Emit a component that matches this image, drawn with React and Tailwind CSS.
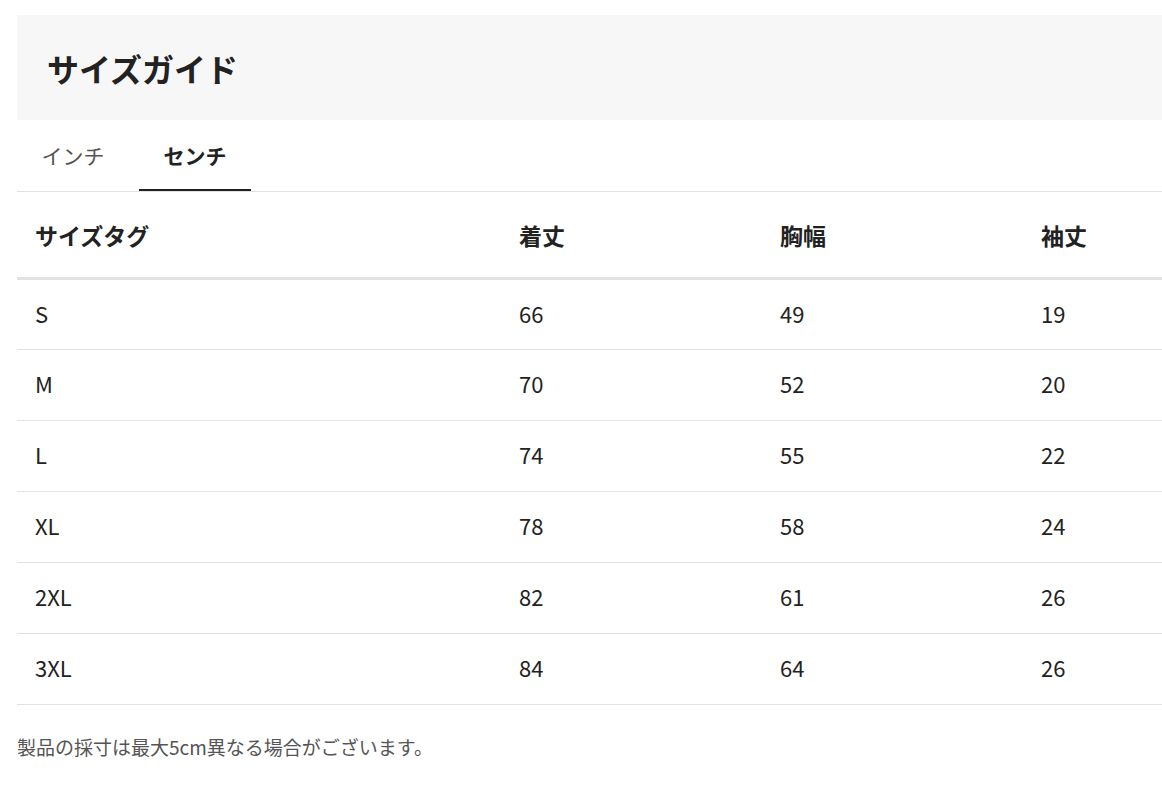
import React from "react";

const rows = [
  ["S", "66", "49", "19"],
  ["M", "70", "52", "20"],
  ["L", "74", "55", "22"],
  ["XL", "78", "58", "24"],
  ["2XL", "82", "61", "26"],
  ["3XL", "84", "64", "26"],
];

export default function App() {
  return (
    <div
      className="bg-white min-h-[799px] pt-[15px] pl-[17px] text-[#222]"
      style={{ fontFamily: '"Noto Sans CJK JP", "Noto Sans", sans-serif' }}
    >
      <div className="w-[1145px]">
        <div className="bg-[#f7f7f7] h-[105px] flex items-center pl-[30px]">
          <h1 className="text-[32px] font-bold leading-none text-[#222]">サイズガイド</h1>
        </div>
        <div className="flex h-[72px] border-b border-[#e2e2e2]">
          <button className="w-[122px] h-full flex items-center justify-center text-[21px] text-[#555] pr-[10px]">
            インチ
          </button>
          <button className="w-[112px] h-full flex items-center justify-center text-[21px] font-bold text-[#222] border-b-2 border-[#222] -mb-px pt-[2px]">
            センチ
          </button>
        </div>
        <table className="w-full border-collapse table-fixed">
          <colgroup>
            <col className="w-[484px]" />
            <col className="w-[261px]" />
            <col className="w-[261px]" />
            <col className="w-[139px]" />
          </colgroup>
          <thead>
            <tr className="h-[86px] border-b-[3px] border-[#e2e2e2]">
              {["サイズタグ", "着丈", "胸幅", "袖丈"].map((h) => (
                <th key={h} className="text-left pl-[18px] text-[23px] font-bold leading-none pt-[3px]">
                  {h}
                </th>
              ))}
            </tr>
          </thead>
          <tbody>
            {rows.map((r) => (
              <tr key={r[0]} className="h-[71px] border-b border-[#e2e2e2]">
                {r.map((c, i) => (
                  <td key={i} className="pl-[18px] text-[22px] leading-none pb-[3px]">
                    {c}
                  </td>
                ))}
              </tr>
            ))}
          </tbody>
        </table>
        <p className="mt-[30px] text-[19px] text-[#555] leading-[24px]">
          製品の採寸は最大5cm異なる場合がございます。
        </p>
      </div>
    </div>
  );
}
